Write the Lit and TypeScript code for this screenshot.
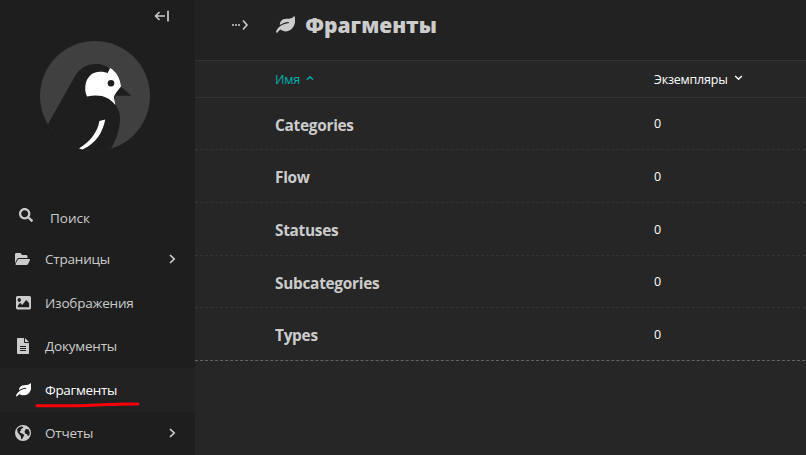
import { LitElement, html, svg, css, TemplateResult } from "lit";
import { customElement, property } from "lit/decorators.js";

interface Glyph { box: string; w: number; h: number; shape: TemplateResult }

const icons: Record<string, Glyph> = {
  search: { box: "0 0 512 512", w: 14, h: 14, shape: svg`<path d="M505 442.7L405.3 343c-4.5-4.5-10.6-7-17-7H372c27.6-35.3 44-79.7 44-128C416 93.1 322.9 0 208 0S0 93.1 0 208s93.1 208 208 208c48.3 0 92.7-16.4 128-44v16.3c0 6.4 2.5 12.5 7 17l99.7 99.7c9.4 9.4 24.6 9.4 33.9 0l28.3-28.3c9.4-9.4 9.4-24.6.1-34zM208 336c-70.7 0-128-57.2-128-128 0-70.7 57.2-128 128-128 70.7 0 128 57.2 128 128 0 70.7-57.2 128-128 128z"/>` },
  folder: { box: "0 64 576 384", w: 15, h: 12, shape: svg`<path d="M572.694 292.093L500.27 416.248A63.997 63.997 0 0 1 444.989 448H45.025c-18.523 0-30.064-20.093-20.731-36.093l72.424-124.155A64 64 0 0 1 152 256h399.964c18.523 0 30.064 20.093 20.73 36.093zM152 224h328v-48c0-26.51-21.49-48-48-48H272l-64-64H48C21.49 64 0 85.49 0 112v278.046l69.077-118.418C86.214 242.25 117.989 224 152 224z"/>` },
  image: { box: "0 64 512 384", w: 15, h: 13.5, shape: svg`<path d="M464 448H48c-26.51 0-48-21.49-48-48V112c0-26.51 21.49-48 48-48h416c26.51 0 48 21.49 48 48v288c0 26.51-21.49 48-48 48zM112 120c-30.928 0-56 25.072-56 56s25.072 56 56 56 56-25.072 56-56-25.072-56-56-56zM64 384h384V272l-87.515-87.515c-4.686-4.686-12.284-4.686-16.971 0L208 320l-55.515-55.515c-4.686-4.686-12.284-4.686-16.971 0L64 336v48z"/>` },
  file: { box: "0 0 384 512", w: 12, h: 16, shape: svg`<path fill-rule="evenodd" d="M224 136V0H24C10.7 0 0 10.7 0 24v464c0 13.3 10.7 24 24 24h336c13.3 0 24-10.7 24-24V160H248c-13.2 0-24-10.8-24-24zM96 256v32h192v-32zM96 320v32h192v-32zM96 384v32h192v-32zM256 0v128h128L256 0z"/>` },
  leaf: { box: "0 0 19.2 17", w: 15.4, h: 13.6, shape: svg`<path d="M18.3 0C19.3 2.2 19.4 5.6 18.4 8.6 17 12.8 13.6 15.4 9.8 15.4 7.6 15.4 5.8 14.8 4.6 13.6 3.3 14.4 2.3 15.3 1.6 16.4 1 17.1-.2 16.7.1 15.6.9 13 3 10.9 5.6 9.3 7.8 8 9.8 7.4 12.3 7.2 13.1 7.1 13.1 5.9 12.3 5.9 9.2 6 6.300 7.200 3.800 9.100 3.700 6.300 5.200 4 7.900 3.100 10.800 2.200 14.800 3.300 16.900 1.200 17.500.700 17.800.300 18.300 0z"/>` },
  globe: { box: "0 0 16 16", w: 16, h: 16, shape: svg`<path fill-rule="evenodd" d="M8 0a8 8 0 1 0 0 16A8 8 0 0 0 8 0zM2 4.4L4 2.2 6.6 1.5 8.5 2 7 3.7 5.8 4.2 6.2 5.6 4.8 6.4 5.2 7.8 7.6 8.7 9.3 10 8.3 11.9 7 14.2 6.2 13.9 5.8 11.2 4.4 9.4 2.8 7.5zM10.8 4L13.4 4.3 14.7 7.2 14.4 10.2 12.9 11.1 12 9.2 10.1 8.5 9.5 6.6z"/>` },
};

@customElement("ui-icon")
class UiIcon extends LitElement {
  @property() name = "leaf";
  @property({ type: Number }) scale = 1;
  static styles = css`:host { display: inline-flex; } svg { fill: currentColor; display: block; }`;
  render() {
    const g = icons[this.name];
    return html`<svg width=${g.w * this.scale} height=${g.h * this.scale} viewBox=${g.box} preserveAspectRatio="none">${g.shape}</svg>`;
  }
}

@customElement("bird-logo")
class BirdLogo extends LitElement {
  static styles = css`:host { display: block; height: 110px; } svg { display: block; }`;
  render() {
    return html`<svg width="110" height="110" viewBox="40 41 110 110">
      <defs><clipPath id="disc"><circle cx="95" cy="96" r="55"/></clipPath></defs>
      <circle cx="95" cy="96" r="55" fill="#404040"/>
      <g clip-path="url(#disc)">
        <path fill="#1e1e1e" d="M48 124L74 78C79 68 87 64 96 64C102 64 107 66 110 69L118 82L121 87L131.5 95.8H115L115 104C119 109 120.3 115 120 120C119.5 132 115 143 109 152H40V124z"/>
      </g>
      <path fill="#fff" d="M87 96.5C82.8 87 86.2 72 100 71.8C103.5 71.7 105.5 72.3 107.5 73.2L110.2 68C116.5 72 120 78 121 86.5C117 91.5 114 95 114 97.500L115.300 105C109 97 101 93.700 87 96.500z"/>
      <circle cx="111" cy="83.3" r="3.3" fill="#1e1e1e"/>
      <path fill="#fff" d="M99.4 121L105.2 119.5C103 132 96 143.5 82.5 149.5L79 148.5C91 141 98 131 99.4 121z"/>
    </svg>`;
  }
}

const chevron = html`<svg class="chev" width="7" height="10" viewBox="0 0 7 10"><path d="M1 1l4.2 4L1 9" fill="none" stroke="currentColor" stroke-width="1.7"/></svg>`;

@customElement("app-root")
class AppRoot extends LitElement {
  static styles = css`
    :host { display: flex; width: 806px; height: 455px; overflow: hidden; background: #262626; color: #ccc; font-family: "Open Sans", "Noto Sans", sans-serif; }
    * { box-sizing: border-box; }
    aside { width: 195px; height: 455px; flex: none; background: #1e1e1e; display: flex; flex-direction: column; }
    svg { display: block; }
    .collapse { height: 41px; padding: 10px 0 0 154px; }
    .logo { padding-left: 40px; height: 155px; }
    .search { height: 42px; padding: 0 0 0 19px; display: flex; align-items: center; gap: 17px; font-size: 13.5px; }
    .search ui-icon { margin-bottom: 4px; }
    .search span { padding-top: 2px; }
    .item { height: 43.5px; flex: none; display: flex; align-items: center; padding: 0 19px 0 15px; font-size: 13.5px; letter-spacing: -0.2px; }
    .item.active { background: #222; color: #fff; letter-spacing: -0.35px; }
    .pic { width: 30px; display: flex; }
    .pic.inset1 { padding-left: 1px; }
    .pic.inset2 { padding-left: 2px; }
    .label { position: relative; }
    .chev { margin-left: auto; }
    .mark { position: absolute; left: -10px; top: 20px; }
    main { flex: 1; min-width: 0; }
    header { height: 60px; background: #222; display: flex; padding-left: 36px; }
    .crumb { width: 45px; padding-top: 19px; }
    .title { display: flex; gap: 10px; }
    .title ui-icon { padding-top: 16px; }
    h1 { margin: 0; font-size: 21px; line-height: 30px; font-weight: 800; padding-top: 10px; }
    .row { display: grid; grid-template-columns: 379px 1fr; padding-left: 80px; height: 53px; border-bottom: 1px dashed #343434; align-items: center; width: 610px; }
    section .row:nth-child(3n + 1) { height: 52px; }
    .row:last-child { border-bottom-color: #646464; }
    .head { height: 38px; border-top: 1px solid #343434; border-bottom: 1px solid #343434; font-size: 12.5px; letter-spacing: -0.2px; color: #fff; width: auto; }
    .head div { display: flex; align-items: center; gap: 6px; }
    .sorted { color: #00b0b1; }
    .head svg { margin-bottom: 3px; }
    .name { font-weight: 700; font-size: 15.4px; letter-spacing: -0.28px; padding-top: 3px; }
    .count { font-size: 12.5px; color: #fff; }
  `;

  private item(icon: string, label: string, cls: string, more = false, active = false) {
    return html`<div class="item ${active ? "active" : ""}">
      <span class="pic ${cls}"><ui-icon name=${icon}></ui-icon></span>
      <span class="label">${label}${active ? html`<svg class="mark" width="106" height="8" viewBox="0 0 106 8"><path d="M2 4.8C24 5 44 4.8 62 4 80 3.2 92 2.9 103 3" fill="none" stroke="#fa0008" stroke-width="3" stroke-linecap="round"/></svg>` : ""}</span>
      ${more ? chevron : ""}
    </div>`;
  }

  render() {
    return html`
      <aside>
        <div class="collapse"><svg width="16" height="12" viewBox="0 0 16 12" fill="none" stroke="#ccc" stroke-width="1.5"><path d="M5.5 2L1.5 6l4 4M1.5 6H11"/><path d="M14 .8v10.6" stroke-width="1.7"/></svg></div>
        <div class="logo"><bird-logo></bird-logo></div>
        <div class="search"><ui-icon name="search"></ui-icon><span>Поиск</span></div>
        <nav>
          ${this.item("folder", "Страницы", "", true)}
          ${this.item("image", "Изображения", "inset1")}
          ${this.item("file", "Документы", "inset2")}
          ${this.item("leaf", "Фрагменты", "inset1", false, true)}
          ${this.item("globe", "Отчеты", "", true)}
        </nav>
      </aside>
      <main>
        <header>
          <div class="crumb"><svg width="18" height="12" viewBox="0 0 18 12" fill="none" stroke="#ccc"><path d="M1 6h8" stroke-width="1.6" stroke-dasharray="2 1"/><path d="M12 1.5L16 6l-4 4.500" stroke-width="1.6"/></svg></div>
          <div class="title"><ui-icon name="leaf" scale="1.25"></ui-icon><h1>Фрагменты</h1></div>
        </header>
        <div class="row head">
          <div class="sorted">Имя <svg width="8" height="6" viewBox="0 0 8 6"><path d="M1 4.7L4 1.7l3 3" fill="none" stroke="currentColor" stroke-width="1.3"/></svg></div>
          <div>Экземпляры <svg width="9" height="6" viewBox="0 0 9 6"><path d="M1.2 1l3.3 3.3L7.8 1" fill="none" stroke="currentColor" stroke-width="1.4"/></svg></div>
        </div>
        <section>
          ${["Categories", "Flow", "Statuses", "Subcategories", "Types"].map(n => html`<div class="row"><span class="name">${n}</span><span class="count">0</span></div>`)}
        </section>
      </main>`;
  }
}
